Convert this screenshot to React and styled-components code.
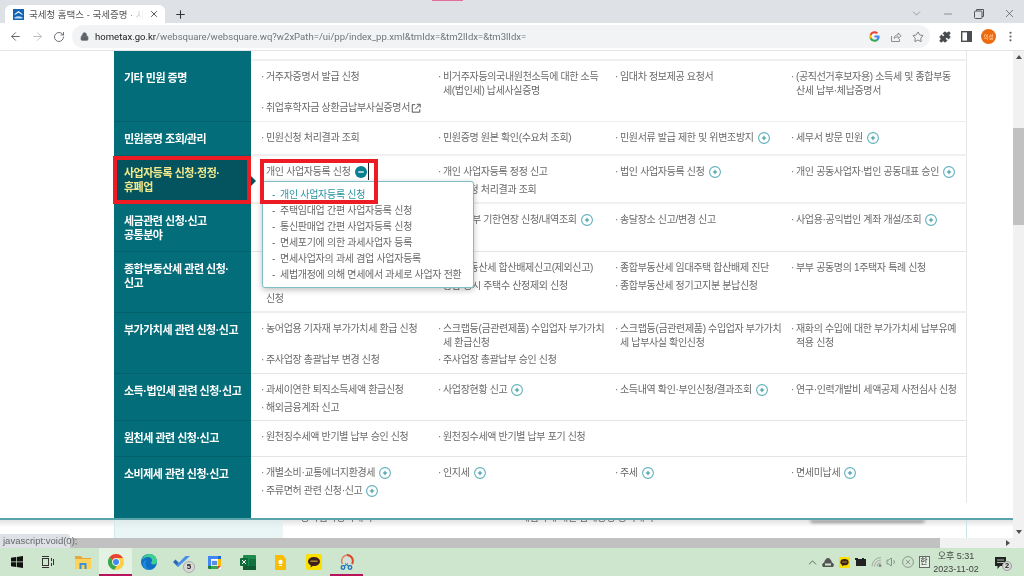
import React from 'react';
import styled, { createGlobalStyle } from 'styled-components';
import {
  ArrowLeft,
  ArrowRight,
  RotateCw,
  Lock,
  Star,
  Puzzle,
  MoreVertical,
  ChevronDown,
  ChevronUp,
  Minus,
  X,
  Plus,
  Volume1,
} from 'lucide-react';

const GlobalStyle = createGlobalStyle`
  html, body {
    margin: 0;
    padding: 0;
    overflow: hidden;
    background: #fff;
  }
  * {
    box-sizing: border-box;
  }
`;

// Table content
const rows = [
  {
    title: '기타 민원 증명',
    height: 61,
    divider: '#eeeeee',
    items: [
      { text: '거주자증명서 발급 신청' },
      { text: '비거주자등의국내원천소득에 대한 소득\n세(법인세) 납세사실증명' },
      { text: '임대차 정보제공 요청서' },
      { text: '(공직선거후보자용) 소득세 및 종합부동\n산세 납부·체납증명서' },
      { text: '취업후학자금 상환금납부사실증명서', external: true },
    ],
  },
  {
    title: '민원증명 조회/관리',
    height: 34,
    divider: '#f0f0f0',
    thick: true,
    items: [
      { text: '민원신청 처리결과 조회' },
      { text: '민원증명 원본 확인(수요처 조회)' },
      { text: '민원서류 발급 제한 및 위변조방지', plus: true },
      { text: '세무서 방문 민원', plus: true },
    ],
  },
  {
    title: '사업자등록 신청·정정·\n휴폐업',
    height: 48,
    divider: '#f0f0f0',
    thick: true,
    active: true,
    items: [
      { text: '개인 사업자등록 신청', open: true },
      { text: '개인 사업자등록 정정 신고' },
      { text: '법인 사업자등록 신청', plus: true },
      { text: '개인 공동사업자·법인 공동대표 승인', plus: true },
      { blank: true },
      { text: '정정신청 처리결과 조회' },
    ],
  },
  {
    title: '세금관련 신청·신고\n공통분야',
    height: 48,
    divider: '#e4e4e4',
    items: [
      { blank: true },
      { text: '세금 납부 기한연장 신청/내역조회', plus: true },
      { text: '송달장소 신고/변경 신고' },
      { text: '사업용·공익법인 계좌 개설/조회', plus: true },
    ],
  },
  {
    title: '종합부동산세 관련 신청·\n신고',
    height: 61,
    divider: '#eeeeee',
    thick: true,
    items: [
      { blank: true },
      { text: '종합부동산세 합산배제신고(제외신고)' },
      { text: '종합부동산세 임대주택 합산배제 진단' },
      { text: '부부 공동명의 1주택자 특례 신청' },
      { text: '\n신청', bare: true },
      { text: '종합 공시 주택수 산정제외 신청' },
      { text: '종합부동산세 정기고지분 분납신청' },
    ],
  },
  {
    title: '부가가치세 관련 신청·신고',
    height: 61,
    divider: '#e4e4e4',
    items: [
      { text: '농어업용 기자재 부가가치세 환급 신청' },
      { text: '스크랩등(금관련제품) 수입업자 부가가치\n세 환급신청' },
      { text: '스크랩등(금관련제품) 수입업자 부가가치\n세 납부사실 확인신청' },
      { text: '재화의 수입에 대한 부가가치세 납부유예\n적용 신청' },
      { text: '주사업장 총괄납부 변경 신청' },
      { text: '주사업장 총괄납부 승인 신청' },
    ],
  },
  {
    title: '소득·법인세 관련 신청·신고',
    height: 47,
    divider: '#e4e4e4',
    items: [
      { text: '과세이연한 퇴직소득세액 환급신청' },
      { text: '사업장현황 신고', plus: true },
      { text: '소득내역 확인·부인신청/결과조회', plus: true },
      { text: '연구·인력개발비 세액공제 사전심사 신청' },
      { text: '해외금융계좌 신고' },
    ],
  },
  {
    title: '원천세 관련 신청·신고',
    height: 36,
    divider: '#e4e4e4',
    items: [
      { text: '원천징수세액 반기별 납부 승인 신청' },
      { text: '원천징수세액 반기별 납부 포기 신청' },
    ],
  },
  {
    title: '소비제세 관련 신청·신고',
    height: 46,
    divider: 'transparent',
    last: true,
    items: [
      { text: '개별소비·교통에너지환경세', plus: true },
      { text: '인지세', plus: true },
      { text: '주세', plus: true },
      { text: '면세미납세', plus: true },
      { text: '주류면허 관련 신청·신고', plus: true },
    ],
  },
];

const menuItems = [
  '개인 사업자등록 신청',
  '주택임대업 간편 사업자등록 신청',
  '통신판매업 간편 사업자등록 신청',
  '면세포기에 의한 과세사업자 등록',
  '면세사업자의 과세 겸업 사업자등록',
  '세법개정에 의해 면세에서 과세로 사업자 전환',
];

// Small drawings
const PlusIcon = () => (
  <PlusSvg viewBox="0 0 12 12">
    <circle cx="6" cy="6" r="5.4" fill="none" stroke="#5fb0bb" strokeWidth="1.1" />
    <path d="M6 3.8v4.400M3.800 6h4.400" stroke="#2f8f9c" strokeWidth="1" />
  </PlusSvg>
);

const MinusIcon = () => (
  <MinusSvg viewBox="0 0 12 12">
    <circle cx="6" cy="6" r="6" fill="#07818f" />
    <path d="M3.200 6h5.600" stroke="#fff" strokeWidth="1.3" />
  </MinusSvg>
);

const ExternalIcon = () => (
  <ExternalSvg viewBox="0 0 12 12">
    <path d="M5 2H1.500v9h9V7.500" fill="none" stroke="#444" strokeWidth="1.1" />
    <path d="M5 7.500 10.500 2M7 1.500h4v4" fill="none" stroke="#444" strokeWidth="1.1" />
  </ExternalSvg>
);

const Favicon = () => (
  <svg width="11" height="11" viewBox="0 0 11 11">
    <rect width="11" height="11" fill="#1264b4" />
    <path d="M1 5.500 5.500 2 10 5.500H8.400L5.500 3.600 2.600 5.500Z" fill="#fff" />
    <path d="M1.500 8.400c2.500-1.400 5.500-1.400 8 0v1h-8Z" fill="#bfe0f5" />
  </svg>
);

const GoogleG = () => (
  <svg width="11" height="11" viewBox="0 0 24 24">
    <path fill="#4285f4" d="M23 12.300c0-.8-.1-1.600-.2-2.300H12v4.400h6.200a5.300 5.300 0 0 1-2.300 3.500v2.900h3.700c2.200-2 3.400-5 3.400-8.500Z" />
    <path fill="#34a853" d="M12 23.500c3.100 0 5.700-1 7.600-2.800l-3.700-2.900c-1 .7-2.300 1.100-3.900 1.100-3 0-5.500-2-6.400-4.700H1.800v3A11.500 11.500 0 0 0 12 23.500Z" />
    <path fill="#fbbc05" d="M5.600 14.200a6.900 6.900 0 0 1 0-4.400v-3H1.800a11.500 11.500 0 0 0 0 10.400Z" />
    <path fill="#ea4335" d="M12 5.100c1.700 0 3.200.6 4.400 1.700l3.300-3.300A11.500 11.500 0 0 0 1.800 6.800l3.800 3C6.500 7.100 9 5.100 12 5.100Z" />
  </svg>
);

const ShareIcon = () => (
  <svg width="12" height="12" viewBox="0 0 12 12" fill="none" stroke="#8a8d91" strokeWidth="1">
    <path d="M1.500 5v5.500h8V8" />
    <path d="M4 7.500C4.300 5 6 3.800 8.200 3.800V2l3 2.800-3 2.700V5.800C6.500 5.800 5 6.300 4 7.500Z" />
  </svg>
);

const SidePanelIcon = () => (
  <svg width="11" height="11" viewBox="0 0 11 11">
    <rect x="0.700" y="0.700" width="9.600" height="9.600" fill="#fff" stroke="#4a4d51" strokeWidth="1.400" />
    <rect x="6" y="1" width="4" height="9" fill="#4a4d51" />
  </svg>
);

const WindowsLogo = () => (
  <svg width="12" height="12" viewBox="0 0 12 12" fill="#111">
    <path d="M0 1.700 5 1v4.600H0ZM5.700.9 12 0v5.600H5.700ZM0 6.300h5v4.700l-5-.7ZM5.700 6.300H12V12l-6.300-.9Z" />
  </svg>
);

const TaskViewIcon = () => (
  <TaskViewSvg width="13" height="12" viewBox="0 0 13 12" fill="none" stroke="#333" strokeWidth="1">
    <rect x="1.500" y="2.500" width="6" height="7" />
    <path d="M1 .5h7M1 11.500h7M10.500 2v3M10.500 7v3M12.500 3v6" />
  </TaskViewSvg>
);

const ExplorerIcon = () => (
  <svg width="16" height="14" viewBox="0 0 16 14">
    <path d="M0 1h6l1.500 2H16v2H0Z" fill="#e8a93a" />
    <rect y="4" width="16" height="10" fill="#fbd25c" />
    <rect x="4.500" y="8" width="7" height="6" fill="#3a90d8" />
    <rect x="6.500" y="10" width="3" height="4" fill="#fbd25c" />
  </svg>
);

const ChromeLogo = () => (
  <svg width="16" height="16" viewBox="0 0 48 48">
    <circle cx="24" cy="24" r="24" fill="#ffce44" />
    <path d="M24 0a24 24 0 0 1 20.800 12H24a12 12 0 0 0-11.300 8L5.500 8.500A24 24 0 0 1 24 0Z" fill="#e94335" />
    <path d="M5.500 8.500 15 24a12 12 0 0 0 11 11.800L19 47.500A24 24 0 0 1 5.500 8.500Z" fill="#34a853" />
    <circle cx="24" cy="24" r="11.500" fill="#fff" />
    <circle cx="24" cy="24" r="9" fill="#4587f4" />
  </svg>
);

const EdgeLogo = () => (
  <svg width="16" height="16" viewBox="0 0 16 16">
    <circle cx="8" cy="8" r="8" fill="#0f6fc6" />
    <path d="M1 6.500C2 2.500 5 0 8.500 0 12.500 0 16 3 16 7.500c0 2-1.500 3-3.300 3-1.300 0-2.700-.6-2.700-1.500 0-.8 1-1 1-2.500C11 4.500 9.500 3 7 3 4.500 3 2 4.500 1 6.500Z" fill="#3fcf8e" />
    <path d="M4.500 10c0 3 2.500 5.500 6 5.500-3 1-8.500-.5-8.500-6 0-2 2-3.500 4-3.500C5 7 4.500 8.500 4.500 10Z" fill="#1a8fe0" />
  </svg>
);

const TodoLogo = () => (
  <svg width="17" height="12" viewBox="0 0 17 12">
    <path d="M0 6 2.500 3.500 6.500 7.500 5 11Z" fill="#2f65b8" />
    <path d="M5 11 3.500 9 12.500 0 17 0Z" fill="#4a90e8" />
  </svg>
);

const CalendarLogo = () => (
  <svg width="13" height="13" viewBox="0 0 13 13">
    <rect width="13" height="13" rx="1" fill="#fff" />
    <path d="M0 0h10v3H3v7H0Z" fill="#4285f4" />
    <path d="M10 0h3v3h-3Z" fill="#1967d2" />
    <path d="M10 3h3v7h-3Z" fill="#fbbc04" />
    <path d="M3 10h7v3H3Z" fill="#34a853" />
    <path d="M10 10h3l-3 3Z" fill="#ea4335" />
    <path d="M0 10h3v3H1a1 1 0 0 1-1-1Z" fill="#188038" />
    <rect x="3.800" y="4.800" width="5.400" height="4.400" fill="#5a8fe0" />
  </svg>
);

const ExcelLogo = () => (
  <svg width="16" height="15" viewBox="0 0 16 15">
    <rect x="3" width="13" height="15" rx="1" fill="#1d8a4e" />
    <rect x="9" y="4" width="7" height="7" fill="#107040" />
    <rect x="3" y="11" width="13" height="4" fill="#0d5c35" />
    <rect y="3" width="8" height="8" rx="1" fill="#0c6b3a" />
    <path d="m2 5 4 4M6 5 2 9" stroke="#fff" strokeWidth="1" />
  </svg>
);

const KeepLogo = () => (
  <svg width="11" height="15" viewBox="0 0 11 15">
    <path d="M0 0h7.500L11 3.500V15H0Z" fill="#fbbc04" />
    <circle cx="5.500" cy="7" r="2.200" fill="#fff" />
    <rect x="4" y="10" width="3" height="1" fill="#fff" />
  </svg>
);

const KakaoLogo = ({ size = 16 }) => (
  <svg width={size} height={size} viewBox="0 0 16 16">
    <rect width="16" height="16" rx="2" fill="#fae100" />
    <ellipse cx="8" cy="7.500" rx="6" ry="4.500" fill="#3c1e1e" />
    <path d="m5 10.500-.5 3 3-2Z" fill="#3c1e1e" />
    <rect x="4.500" y="6.500" width="7" height="1.500" fill="#a98a30" />
  </svg>
);

const SnipLogo = () => (
  <svg width="14" height="16" viewBox="0 0 14 16">
    <path d="M7 1a6 6 0 0 1 5 9" fill="none" stroke="#d9482b" strokeWidth="2" />
    <path d="M7 1a6 6 0 0 0-4.500 9" fill="none" stroke="#e4806a" strokeWidth="1.500" />
    <path d="M6 3h4v7H6Z" fill="#ddd" />
    <circle cx="3" cy="13.500" r="1.800" fill="none" stroke="#1a6fc0" strokeWidth="1.300" />
    <circle cx="10" cy="13.500" r="1.800" fill="none" stroke="#1a6fc0" strokeWidth="1.300" />
    <path d="m4 12.500 4-3M9 12.500l-4-3" stroke="#1a6fc0" strokeWidth="1" />
  </svg>
);

const CloudIcon = () => (
  <svg width="12" height="9" viewBox="0 0 12 9">
    <path d="M1 8.500h10c1-2-.2-3.700-1.600-3.700C9 2 7.500.5 6 .5S3 2 2.600 4.800C1.200 4.800 0 6.500 1 8.500Z" fill="#555" stroke="#555" />
    <path d="M3 6.500h6" stroke="#cde6cd" strokeWidth="2" />
  </svg>
);

const BatteryIcon = () => (
  <svg width="11" height="8" viewBox="0 0 11 8">
    <rect x="1" y="1" width="10" height="7" fill="#222" />
    <rect x="0" y="0" width="3" height="2" fill="#222" />
    <rect x="7" y="0" width="2" height="2" fill="#222" />
  </svg>
);

const WifiIcon = () => (
  <svg width="11" height="10" viewBox="0 0 11 10" fill="none" stroke="#999" strokeWidth="0.800">
    <path d="M1 9.500a9 9 0 0 1 9-9M3.500 9.500A6.500 6.500 0 0 1 10 3M6 9.500A4 4 0 0 1 10 5.500" />
    <circle cx="9" cy="8.500" r="1.500" fill="#888" stroke="none" />
  </svg>
);

const MutedIcon = () => (
  <svg width="12" height="12" viewBox="0 0 12 12" fill="none" stroke="#777" strokeWidth="0.700">
    <circle cx="6" cy="6" r="5.400" />
    <path d="m3.800 3.800 4.400 4.400m0-4.400-4.400 4.400" />
  </svg>
);

const NoticeIcon = () => (
  <svg width="11" height="12" viewBox="0 0 11 12">
    <path d="M0 0h11v9H5l-2.500 3V9H0Z" fill="#222" />
    <path d="M2 3h7M2 5.500h7" stroke="#cde6cd" strokeWidth="0.800" />
  </svg>
);

const RestoreIcon = () => (
  <svg width="10" height="10" viewBox="0 0 10 10" fill="none" stroke="#555" strokeWidth="1">
    <rect x="0.500" y="2" width="7.500" height="7.500" rx="1" />
    <path d="M2.500 1.800V.5h7v7H8" />
  </svg>
);

const Item = ({ item }) => {
  if (item.blank) return <Entry />;
  if (item.open) {
    return (
      <OpenEntry>
        {item.text}
        <MinusIcon />
      </OpenEntry>
    );
  }
  return (
    <Entry $bare={item.bare}>
      {item.text}
      {item.plus && <PlusIcon />}
      {item.external && <ExternalIcon />}
    </Entry>
  );
};

const App = () => {
  return (
    <>
      <GlobalStyle />
      <Screen>
        <TabStrip>
          <Tab>
            <Favicon />
            <TabTitle>국세청 홈택스 - 국세증명 · 사업</TabTitle>
            <X size={10} strokeWidth={2} color="#333" />
          </Tab>
          <NewTab>
            <Plus size={13} strokeWidth={2} color="#333" />
          </NewTab>
          <PinkMark />
          <WindowControls>
            <ChevronDown size={13} strokeWidth={1.2} color="#777" />
            <Minus size={12} strokeWidth={1.2} color="#555" />
            <RestoreIcon />
            <X size={13} strokeWidth={1.2} color="#444" />
          </WindowControls>
        </TabStrip>

        <Toolbar>
          <NavButtons>
            <ArrowLeft size={13} color="#5f6368" strokeWidth={1.8} />
            <ArrowRight size={13} color="#b9bcc0" strokeWidth={1.8} />
            <RotateCw size={12} color="#5f6368" strokeWidth={1.8} />
          </NavButtons>
          <Omnibox>
            <Lock size={9} color="#5f6368" fill="#5f6368" />
            <Url>
              <b>hometax.go.kr</b>/websquare/websquare.wq?w2xPath=/ui/pp/index_pp.xml&amp;tmIdx=&amp;tm2lIdx=&amp;tm3lIdx=
            </Url>
            <OmniActions>
              <GoogleG />
              <ShareIcon />
              <Star size={12} color="#5f6368" strokeWidth={1.6} />
            </OmniActions>
          </Omnibox>
          <ToolbarActions>
            <Puzzle size={12} color="#45484c" fill="#45484c" />
            <SidePanelIcon />
            <Avatar>의성</Avatar>
            <MoreVertical size={13} color="#5f6368" strokeWidth={2} />
          </ToolbarActions>
        </Toolbar>

        <PageArea>
          <Viewport>
            <Panel>
              <TopRow>
                <TopHead />
                <TopBody />
              </TopRow>
              {rows.map((row) => (
                <Row key={row.title} $height={row.height}>
                  <Head $active={row.active} $last={row.last}>{row.title}</Head>
                  <Body $divider={row.divider} $thick={row.thick}>
                    {row.items.map((item, i) => (
                      <Item key={i} item={item} />
                    ))}
                  </Body>
                  {row.active && (
                    <>
                      <HeadArrow />
                      <HeadMark />
                      <Menu>
                        {menuItems.map((text, i) => (
                          <MenuItem key={text} $active={i === 0}>
                            <MenuLabel $active={i === 0}>{text}</MenuLabel>
                          </MenuItem>
                        ))}
                      </Menu>
                      <ItemMark />
                    </>
                  )}
                </Row>
              ))}
              <TailRow>
                <TailHead />
              </TailRow>
            </Panel>
            <Underlay>
              <UnderlayBox />
              <UnderlayText>- 동사업자등록내역</UnderlayText>
              <UnderlayText $wide>- 폐업자에 대한 납세증명 등록내역</UnderlayText>
              <UnderlayShadow />
              <UnderlayEdge />
            </Underlay>
          </Viewport>
          <VScroll>
            <ChevronUpMark />
            <VThumb />
            <ChevronDownMark />
          </VScroll>
        </PageArea>

        <HScroll>
          <HThumb />
          <HArrow />
        </HScroll>
        <StatusBubble>javascript:void(0);</StatusBubble>

        <Taskbar>
          <TaskIcons>
            <TaskSlot><WindowsLogo /></TaskSlot>
            <TaskSlot><TaskViewIcon /></TaskSlot>
            <TaskSlot><ExplorerIcon /></TaskSlot>
            <TaskSlot $open $active><ChromeLogo /></TaskSlot>
            <TaskSlot><EdgeLogo /></TaskSlot>
            <TaskSlot>
              <TodoLogo />
              <TaskBadge>5</TaskBadge>
            </TaskSlot>
            <TaskSlot><CalendarLogo /></TaskSlot>
            <TaskSlot><ExcelLogo /></TaskSlot>
            <TaskSlot><KeepLogo /></TaskSlot>
            <TaskSlot><KakaoLogo /></TaskSlot>
            <TaskSlot $open><SnipLogo /></TaskSlot>
          </TaskIcons>
          <Tray>
            <TraySlot><ChevronUp size={13} strokeWidth={1.3} color="#333" /></TraySlot>
            <TraySlot><CloudIcon /></TraySlot>
            <TraySlot><KakaoLogo size={11} /></TraySlot>
            <TraySlot><BatteryIcon /></TraySlot>
            <TraySlot><WifiIcon /></TraySlot>
            <TraySlot><Volume1 size={12} strokeWidth={1.2} color="#555" /></TraySlot>
            <TraySlot><MutedIcon /></TraySlot>
            <TraySlot><ImeBox>한</ImeBox></TraySlot>
            <Clock>
              <span>오후 5:31</span>
              <span>2023-11-02</span>
            </Clock>
            <NoticeSlot>
              <NoticeIcon />
              <NoticeBadge>2</NoticeBadge>
            </NoticeSlot>
          </Tray>
        </Taskbar>
      </Screen>
    </>
  );
};

const PlusSvg = styled.svg`
  width: 12px;
  height: 12px;
  margin-left: 4px;
  vertical-align: -3px;
`;

const ExternalSvg = styled.svg`
  width: 10px;
  height: 10px;
  margin-left: 1px;
  vertical-align: -2px;
`;

const MinusSvg = styled.svg`
  width: 12px;
  height: 12px;
  margin-left: 4px;
  flex: none;
`;

const TaskViewSvg = styled.svg`
  margin-right: 4px;
`;

const Screen = styled.div`
  position: relative;
  width: 1024px;
  height: 576px;
  overflow: hidden;
  display: flex;
  flex-direction: column;
  background: #fff;
  font-family: 'Liberation Sans', 'Noto Sans CJK KR', sans-serif;
  filter: blur(0.45px);
`;

const TabStrip = styled.div`
  position: relative;
  height: 23px;
  flex: none;
  display: flex;
  align-items: flex-end;
  padding-left: 5px;
  background: #dee1e6;
`;

const Tab = styled.div`
  width: 160px;
  height: 18px;
  padding: 0 6px 0 8px;
  display: flex;
  align-items: center;
  gap: 5px;
  border-radius: 6px 6px 0 0;
  background: #fff;
`;

const TabTitle = styled.div`
  flex: 1;
  min-width: 0;
  overflow: hidden;
  white-space: nowrap;
  font-size: 9.5px;
  color: #555;
  -webkit-mask-image: linear-gradient(to right, #000 85%, transparent);
  mask-image: linear-gradient(to right, #000 85%, transparent);
`;

const NewTab = styled.div`
  width: 20px;
  height: 18px;
  margin-left: 5px;
  display: flex;
  align-items: center;
  justify-content: center;
`;

const PinkMark = styled.div`
  position: absolute;
  top: 0;
  left: 432px;
  width: 31px;
  height: 1px;
  background: #e0709a;
`;

const WindowControls = styled.div`
  margin-left: auto;
  align-self: stretch;
  padding: 4px 8px 0 0;
  display: flex;
  gap: 19.5px;
  align-items: center;
`;

const Toolbar = styled.div`
  height: 28px;
  flex: none;
  display: flex;
  align-items: center;
  background: #fff;
  border-bottom: 1px solid #e3e4e6;
`;

const NavButtons = styled.div`
  width: 72px;
  padding-left: 9px;
  flex: none;
  display: flex;
  align-items: center;
  gap: 9px;
`;

const Omnibox = styled.div`
  flex: 1;
  height: 23px;
  padding: 0 6px 0 8px;
  display: flex;
  align-items: center;
  border-radius: 12px;
  background: #f1f3f4;
`;

const Url = styled.div`
  margin-left: 6px;
  flex: 1;
  white-space: nowrap;
  font-family: 'Roboto', 'Liberation Sans', sans-serif;
  font-size: 9.55px;
  color: #70757a;

  b {
    font-weight: 400;
    color: #202124;
  }
`;

const OmniActions = styled.div`
  display: flex;
  align-items: center;
  gap: 10px;
`;

const ToolbarActions = styled.div`
  width: 94px;
  flex: none;
  padding-left: 9px;
  display: flex;
  align-items: center;
  gap: 9.5px;
`;

const Avatar = styled.div`
  width: 15px;
  height: 15px;
  margin-right: -2px;
  border-radius: 50%;
  display: flex;
  align-items: center;
  justify-content: center;
  background: #ee6a0c;
  color: #ffd9bd;
  font-size: 5.5px;
`;

const PageArea = styled.div`
  height: 487px;
  flex: none;
  display: flex;
`;

const Viewport = styled.div`
  width: 1013px;
  flex: none;
  display: flex;
  flex-direction: column;
`;

const Panel = styled.div`
  position: relative;
  height: 469px;
  padding-left: 114px;
  background: #fff;
  border-bottom: 2px solid #5aa3ab;
`;

const TopRow = styled.div`
  height: 10px;
  display: grid;
  grid-template-columns: 137px 716px;
`;

const TopHead = styled.div`
  background: #036d79;
`;

const TopBody = styled.div`
  border-right: 1px solid #e6e6e6;
  border-bottom: 2px solid #f0f0f0;
`;

const Row = styled.div`
  position: relative;
  height: ${(p) => p.$height}px;
  display: grid;
  grid-template-columns: 137px 716px;
`;

const Head = styled.div`
  padding: 10px 0 0 10px;
  white-space: pre-line;
  font-size: 11px;
  font-weight: 700;
  line-height: 14px;
  letter-spacing: -0.5px;
  color: ${(p) => (p.$active ? '#f3e98c' : '#fff')};
  background: ${(p) => (p.$active ? '#04545f' : '#036d79')};
  border-bottom: 1px solid ${(p) => (p.$last ? '#036d79' : '#04606b')};
`;

const Body = styled.div`
  padding: 9px 0 0 10px;
  display: grid;
  grid-template-columns: 177px 177px 176px 177px;
  grid-auto-rows: min-content;
  row-gap: 4px;
  border-right: 1px solid #e6e6e6;
  border-bottom: ${(p) => (p.$thick ? 2 : 1)}px solid ${(p) => p.$divider};
`;

const Entry = styled.div`
  position: relative;
  padding-left: 5px;
  white-space: pre-line;
  font-size: 10px;
  line-height: 13.5px;
  letter-spacing: -0.35px;
  color: #6a6a6a;

  &:not(:empty)::before {
    content: ${(p) => (p.$bare ? 'none' : "'·'")};
    position: absolute;
    left: 0;
    top: 0;
  }
`;

const OpenEntry = styled.div`
  display: flex;
  align-items: center;
  padding-left: 5px;
  white-space: nowrap;
  font-size: 10px;
  line-height: 13.5px;
  letter-spacing: -0.35px;
  color: #6a6a6a;
`;

const HeadArrow = styled.div`
  position: absolute;
  left: 137px;
  top: 20px;
  width: 0;
  height: 0;
  border-left: 5px solid #04545f;
  border-top: 5px solid transparent;
  border-bottom: 5px solid transparent;
`;

const HeadMark = styled.div`
  position: absolute;
  left: -1px;
  top: 0;
  width: 138px;
  height: 48px;
  border: 4px solid #ed1c24;
`;

const ItemMark = styled.div`
  position: absolute;
  left: 146px;
  top: 3px;
  z-index: 2;
  width: 118px;
  height: 45px;
  border: 4px solid #ed1c24;
  pointer-events: none;

  &::after {
    content: '';
    position: absolute;
    right: 5px;
    top: 0;
    width: 1px;
    height: 17px;
    background: #222;
  }
`;

const Menu = styled.div`
  position: absolute;
  left: 148px;
  top: 25px;
  z-index: 1;
  width: 212px;
  height: 107px;
  padding: 5px 0 0 9px;
  border: 1px solid #7fc0c8;
  border-radius: 3px;
  background: #fff;
  box-shadow: 0 2px 6px rgba(0, 0, 0, 0.25);
`;

const MenuItem = styled.div`
  position: relative;
  height: 16.1px;
  padding-left: 8px;
  white-space: nowrap;
  font-size: 10px;
  line-height: 16px;
  letter-spacing: -0.3px;
  color: ${(p) => (p.$active ? '#2a93a0' : '#6a6a6a')};

  &::before {
    content: '-';
    position: absolute;
    left: 0;
    top: 0;
  }
`;

const MenuLabel = styled.span`
  text-decoration: ${(p) => (p.$active ? 'underline' : 'none')};
  text-underline-offset: 2px;
`;

const TailRow = styled.div`
  height: 15px;
`;

const TailHead = styled.div`
  width: 137px;
  height: 15px;
  background: #036d79;
`;

const Underlay = styled.div`
  height: 18px;
  padding-left: 114px;
  display: flex;
  overflow: hidden;
  background: linear-gradient(#e2e2e2, #fff 40%);
`;

const UnderlayBox = styled.div`
  width: 169px;
  flex: none;
  background: linear-gradient(#dfeaea, #eaf5f5 50%);
  border-left: 1px solid #d5e8e8;
`;

const UnderlayText = styled.div`
  width: ${(p) => (p.$wide ? 304 : 223)}px;
  flex: none;
  padding-left: ${(p) => (p.$wide ? 9 : 12)}px;
  margin-top: -9px;
  white-space: nowrap;
  font-size: 10px;
  line-height: 14px;
  letter-spacing: -0.25px;
  color: #666;
`;

const UnderlayShadow = styled.div`
  width: 115px;
  height: 3px;
  flex: none;
  border-radius: 0 0 8px 8px;
  background: #999;
  filter: blur(1.5px);
`;

const UnderlayEdge = styled.div`
  margin-left: 41px;
  width: 1px;
  background: #c8e4e8;
`;

const VScroll = styled.div`
  width: 11px;
  flex: none;
  padding-top: 4px;
  display: flex;
  flex-direction: column;
  align-items: center;
  background: #f1f1f1;
`;

const ChevronUpMark = styled.div`
  width: 0;
  height: 0;
  border-left: 3px solid transparent;
  border-right: 3px solid transparent;
  border-bottom: 4px solid #505050;
`;

const VThumb = styled.div`
  width: 100%;
  height: 97px;
  margin-top: 69px;
  background: #c1c1c1;
`;

const ChevronDownMark = styled.div`
  width: 0;
  height: 0;
  margin-top: 305px;
  border-left: 3px solid transparent;
  border-right: 3px solid transparent;
  border-top: 4px solid #505050;
`;

const HScroll = styled.div`
  height: 10px;
  flex: none;
  display: flex;
  align-items: center;
  background: #f1f1f1;
`;

const HThumb = styled.div`
  width: 940px;
  height: 100%;
  background: #c1c1c1;
`;

const HArrow = styled.div`
  margin-left: 66px;
  width: 0;
  height: 0;
  border-top: 3px solid transparent;
  border-bottom: 3px solid transparent;
  border-left: 4px solid #505050;
`;

const StatusBubble = styled.div`
  position: absolute;
  left: 0;
  top: 534px;
  width: 70px;
  height: 14px;
  padding-left: 3px;
  border-radius: 0 3px 0 0;
  background: #dee1e6;
  font-size: 9.5px;
  line-height: 14px;
  color: #666;
  white-space: nowrap;
`;

const Taskbar = styled.div`
  height: 28px;
  flex: none;
  display: flex;
  justify-content: space-between;
  background: #cde6cd;
`;

const TaskIcons = styled.div`
  display: flex;
`;

const TaskSlot = styled.div`
  position: relative;
  width: 33px;
  display: flex;
  align-items: center;
  justify-content: center;
  background: ${(p) => (p.$active ? '#e4f2e4' : 'transparent')};
  border-bottom: 2px solid ${(p) => (p.$open ? '#b8145c' : 'transparent')};
  border-top: 2px solid transparent;
`;

const TaskBadge = styled.div`
  position: absolute;
  left: 18px;
  top: 11px;
  width: 12px;
  height: 12px;
  border-radius: 50%;
  border: 1px solid #aaa;
  background: #d8d8d8;
  font-size: 8px;
  font-weight: 700;
  line-height: 10px;
  text-align: center;
  color: #222;
`;

const Tray = styled.div`
  display: flex;
  align-items: center;
  padding-right: 12px;
`;

const TraySlot = styled.div`
  width: 16px;
  display: flex;
  align-items: center;
  justify-content: center;
`;

const ImeBox = styled.div`
  width: 11px;
  height: 12px;
  border: 1px solid #666;
  background: #e5f2e5;
  font-size: 8px;
  line-height: 10px;
  text-align: center;
  color: #222;
`;

const Clock = styled.div`
  width: 48px;
  padding-top: 2px;
  display: flex;
  flex-direction: column;
  align-items: center;
  font-size: 9px;
  line-height: 13px;
  white-space: nowrap;
  color: #444;
`;

const NoticeSlot = styled.div`
  position: relative;
  width: 17px;
  margin: 4px 0 0 15px;
  height: 18px;
`;

const NoticeBadge = styled.div`
  position: absolute;
  left: 7px;
  top: 6px;
  width: 10px;
  height: 10px;
  border-radius: 50%;
  border: 1px solid #999;
  background: #d8d8d8;
  font-size: 7.5px;
  font-weight: 700;
  line-height: 8px;
  text-align: center;
  color: #222;
`;

export default App;
